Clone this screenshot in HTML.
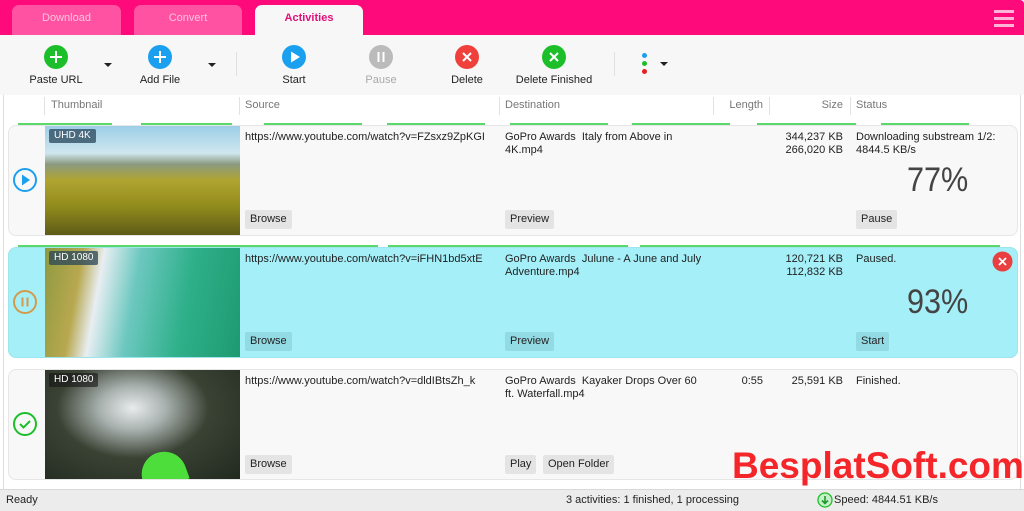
<!DOCTYPE html>
<html><head><meta charset="utf-8"><style>
*{margin:0;padding:0;box-sizing:border-box}
body{width:1024px;height:511px;overflow:hidden;background:#fff;font-family:"Liberation Sans","DejaVu Sans",sans-serif;font-size:11px;color:#222;position:relative}
.a{position:absolute}
.hdr{left:0;top:0;width:1024px;height:35px;background:#fe0a7b;border-radius:0 4px 0 0}
.tab{top:5px;height:30px;border-radius:7px 7px 0 0;background:#ff52a2;color:#ffc4df;font-size:11px;text-align:center;line-height:27px}
.tb{left:0;top:35px;width:1024px;height:60px;background:#f7f7f7}
.btn{top:43px;width:90px;text-align:center;font-size:11px;color:#222}
.btn .c{width:24px;height:24px;border-radius:50%;margin:2px auto 5px;position:relative}
.arr{width:0;height:0;border-left:4px solid transparent;border-right:4px solid transparent;border-top:4px solid #222}
.ch{top:95px;height:22px;line-height:21px;color:#777;font-size:11px}
.sep{top:97px;width:1px;height:18px;background:#e2e2e2}
.row{left:8px;width:1010px;height:111px;border-radius:8px;border:1px solid #e6e6e6;background:#f8f8f8}
.th{left:45px;width:195px;height:109px;overflow:hidden}
.badge{left:4px;top:3px;padding:0 5px;height:14px;line-height:14px;background:rgba(40,70,90,.75);color:#fff;font-size:10px;border-radius:2px}
.t{font-size:11px;line-height:13px;color:#222}
.b{height:19px;line-height:19px;padding:0 5px;background:#e4e4e4;border-radius:2px;font-size:11px;color:#222}
.pct{font-size:34px;color:#444;font-weight:300;transform:scaleX(0.9);transform-origin:left}
.gl{height:2px;background:#5ad86a}
</style></head><body>
<div class="a hdr"></div>
<div class="a tab" style="left:12px;width:109px">Download</div>
<div class="a tab" style="left:134px;width:108px">Convert</div>
<div class="a tab" style="left:255px;width:108px;background:#f7f7f7;color:#e0107a;font-weight:bold">Activities</div>
<div class="a" style="left:994px;top:10px;width:20px;height:3px;background:#ffb3d6"></div>
<div class="a" style="left:994px;top:17px;width:20px;height:3px;background:#ffb3d6"></div>
<div class="a" style="left:994px;top:24px;width:20px;height:3px;background:#ffb3d6"></div>

<div class="a tb"></div>
<div class="a btn" style="left:11px"><div class="c" style="background:#1cbf2a"><svg width="24" height="24"><path d="M12 6v12M6 12h12" stroke="#fff" stroke-width="2"/></svg></div>Paste URL</div>
<div class="a arr" style="left:104px;top:63px"></div>
<div class="a btn" style="left:115px"><div class="c" style="background:#1ba0ef"><svg width="24" height="24"><path d="M12 6v12M6 12h12" stroke="#fff" stroke-width="2"/></svg></div>Add File</div>
<div class="a arr" style="left:208px;top:63px"></div>
<div class="a" style="left:236px;top:52px;width:1px;height:24px;background:#e0e0e0"></div>
<div class="a btn" style="left:249px"><div class="c" style="background:#1ba0ef"><svg width="24" height="24"><path d="M9 6.5l9 5.5-9 5.5z" fill="#fff"/></svg></div>Start</div>
<div class="a btn" style="left:336px;color:#aaa"><div class="c" style="background:#bbb"><svg width="24" height="24"><path d="M9.5 7v10M14.5 7v10" stroke="#fff" stroke-width="2"/></svg></div>Pause</div>
<div class="a btn" style="left:422px"><div class="c" style="background:#f0403c"><svg width="24" height="24"><path d="M8 8l8 8M16 8l-8 8" stroke="#fff" stroke-width="2"/></svg></div>Delete</div>
<div class="a btn" style="left:509px"><div class="c" style="background:#1cbf2a"><svg width="24" height="24"><path d="M8 8l8 8M16 8l-8 8" stroke="#fff" stroke-width="2"/></svg></div>Delete Finished</div>
<div class="a" style="left:614px;top:52px;width:1px;height:24px;background:#e0e0e0"></div>
<div class="a" style="left:642px;top:53px;width:5px;height:5px;border-radius:50%;background:#1ba0ef"></div>
<div class="a" style="left:642px;top:61px;width:5px;height:5px;border-radius:50%;background:#1cbf2a"></div>
<div class="a" style="left:642px;top:69px;width:5px;height:5px;border-radius:50%;background:#e52020"></div>
<div class="a arr" style="left:660px;top:62px"></div>

<div class="a" style="left:3px;top:95px;width:1px;height:394px;background:#ddd"></div>
<div class="a" style="left:1020px;top:95px;width:1px;height:394px;background:#ddd"></div>
<div class="a sep" style="left:44px"></div>
<div class="a ch" style="left:51px">Thumbnail</div>
<div class="a sep" style="left:239px"></div>
<div class="a ch" style="left:245px">Source</div>
<div class="a sep" style="left:499px"></div>
<div class="a ch" style="left:505px">Destination</div>
<div class="a sep" style="left:713px"></div>
<div class="a ch" style="left:715px;width:48px;text-align:right">Length</div>
<div class="a sep" style="left:769px"></div>
<div class="a ch" style="left:771px;width:72px;text-align:right">Size</div>
<div class="a sep" style="left:850px"></div>
<div class="a ch" style="left:856px">Status</div>

<!-- row 1 -->
<div class="a gl" style="left:18px;top:123px;width:94px"></div><div class="a gl" style="left:141px;top:123px;width:91px"></div><div class="a gl" style="left:264px;top:123px;width:98px"></div><div class="a gl" style="left:387px;top:123px;width:98px"></div><div class="a gl" style="left:510px;top:123px;width:98px"></div><div class="a gl" style="left:632px;top:123px;width:98px"></div><div class="a gl" style="left:757px;top:123px;width:99px"></div><div class="a gl" style="left:881px;top:123px;width:88px"></div>
<div class="a row" style="top:125px"></div>
<div class="a th" style="top:126px;background:linear-gradient(180deg,#9ccfe8 0%,#cfe6ee 25%,#8a9a80 35%,#b0a430 50%,#8f8a1c 75%,#5e5a18 100%)"><div class="a badge">UHD 4K</div></div>
<svg class="a" style="left:12px;top:167px" width="26" height="26"><circle cx="13" cy="13" r="11" fill="none" stroke="#1ba0ef" stroke-width="2"/><path d="M10 7.5l8 5.5-8 5.5z" fill="#1ba0ef"/></svg>
<div class="a t" style="left:245px;top:131px">https://www.youtube.com/watch?v=FZsxz9ZpKGI</div>
<div class="a t" style="left:505px;top:131px">GoPro Awards&nbsp; Italy from Above in<br>4K.mp4</div>
<div class="a t" style="left:771px;top:131px;width:72px;text-align:right">344,237 KB<br>266,020 KB</div>
<div class="a t" style="left:856px;top:131px">Downloading substream 1/2:<br>4844.5 KB/s</div>
<div class="a pct" style="left:907px;top:161px">77%</div>
<div class="a b" style="left:245px;top:210px">Browse</div>
<div class="a b" style="left:505px;top:210px">Preview</div>
<div class="a b" style="left:856px;top:210px">Pause</div>

<!-- row 2 -->
<div class="a gl" style="left:18px;top:245px;width:360px"></div><div class="a gl" style="left:388px;top:245px;width:240px"></div><div class="a gl" style="left:640px;top:245px;width:360px"></div>
<div class="a row" style="top:247px;background:#a5eff8;border-color:#9ce4ee"></div>
<div class="a th" style="top:248px;background:linear-gradient(100deg,#8e9a40 0%,#b8a850 18%,#e8eef2 28%,#6dc8c0 45%,#2fb08a 70%,#1e9a70 100%)"><div class="a badge">HD 1080</div></div>
<svg class="a" style="left:12px;top:289px" width="26" height="26"><circle cx="13" cy="13" r="11" fill="none" stroke="#d49a4a" stroke-width="2"/><path d="M10.5 8.5v9M15.5 8.5v9" stroke="#d49a4a" stroke-width="2"/></svg>
<div class="a t" style="left:245px;top:253px">https://www.youtube.com/watch?v=iFHN1bd5xtE</div>
<div class="a t" style="left:505px;top:253px">GoPro Awards&nbsp; Julune - A June and July<br>Adventure.mp4</div>
<div class="a t" style="left:771px;top:253px;width:72px;text-align:right">120,721 KB<br>112,832 KB</div>
<div class="a t" style="left:856px;top:253px">Paused.</div>
<div class="a pct" style="left:907px;top:283px">93%</div>
<svg class="a" style="left:992px;top:251px" width="21" height="21"><circle cx="10.5" cy="10.5" r="10" fill="#e84040"/><path d="M7 7l7 7M14 7l-7 7" stroke="#fff" stroke-width="1.8"/></svg>
<div class="a b" style="left:245px;top:332px;background:#93dbe4">Browse</div>
<div class="a b" style="left:505px;top:332px;background:#93dbe4">Preview</div>
<div class="a b" style="left:856px;top:332px;background:#93dbe4">Start</div>

<!-- row 3 -->
<div class="a row" style="top:369px"></div>
<div class="a th" style="top:370px;background:radial-gradient(ellipse at 45% 35%,#e8ecec 0%,#a8b0ae 22%,#3a4234 50%,#222a20 100%)"><div class="a badge" style="background:rgba(20,20,20,.6)">HD 1080</div><div class="a" style="left:95px;top:82px;width:45px;height:35px;background:#4ede3c;border-radius:25px 25px 0 0;transform:rotate(-20deg)"></div></div>
<svg class="a" style="left:12px;top:411px" width="26" height="26"><circle cx="13" cy="13" r="11" fill="none" stroke="#1cbf2a" stroke-width="2"/><path d="M8 13l3.5 3.5L18 10" fill="none" stroke="#1cbf2a" stroke-width="2"/></svg>
<div class="a t" style="left:245px;top:375px">https://www.youtube.com/watch?v=dldIBtsZh_k</div>
<div class="a t" style="left:505px;top:375px">GoPro Awards&nbsp; Kayaker Drops Over 60<br>ft. Waterfall.mp4</div>
<div class="a t" style="left:715px;top:375px;width:48px;text-align:right">0:55</div>
<div class="a t" style="left:771px;top:375px;width:72px;text-align:right">25,591 KB</div>
<div class="a t" style="left:856px;top:375px">Finished.</div>
<div class="a b" style="left:245px;top:455px">Browse</div>
<div class="a b" style="left:505px;top:455px">Play</div>
<div class="a b" style="left:543px;top:455px">Open Folder</div>

<div class="a" style="left:732px;top:446px;font-size:37px;font-weight:bold;color:#f4262a;letter-spacing:0;line-height:40px">BesplatSoft.com</div>

<!-- status -->
<div class="a" style="left:0;top:489px;width:1024px;height:22px;background:#ececec;border-top:1px solid #d8d8d8"></div>
<div class="a t" style="left:6px;top:494px">Ready</div>
<div class="a t" style="left:566px;top:494px">3 activities: 1 finished, 1 processing</div>
<svg class="a" style="left:817px;top:492px" width="16" height="16"><circle cx="8" cy="8" r="7" fill="#c8f0c8" stroke="#1cbf2a" stroke-width="1.3"/><path d="M8 4v7M5 8.5l3 3 3-3" fill="none" stroke="#1a9a2a" stroke-width="1.6"/></svg>
<div class="a t" style="left:834px;top:494px">Speed: 4844.51 KB/s</div>
</body></html>
